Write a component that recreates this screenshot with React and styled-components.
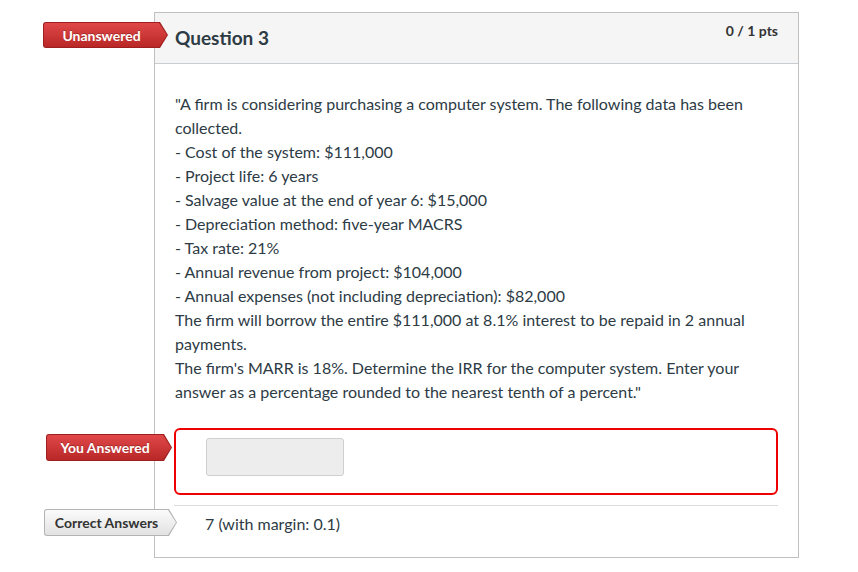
import React from 'react';
import styled, { createGlobalStyle } from 'styled-components';

const GlobalStyle = createGlobalStyle`
  html, body {
    margin: 0;
    padding: 0;
    background: #fff;
  }
  body {
    font-family: Lato, "Open Sans", "Liberation Sans", sans-serif;
    color: #2d3b45;
  }
`;

const Page = styled.div`
  width: 858px;
  height: 572px;
  padding: 12px 0 0 154px;
  box-sizing: border-box;
`;

const QuestionBox = styled.div`
  width: 645px;
  border: 1px solid #c0c0c0;
  box-sizing: border-box;
`;

const Header = styled.div`
  position: relative;
  height: 50px;
  background: #f5f5f5;
  border-bottom: 1px solid #c7cdd1;
  display: flex;
  justify-content: space-between;
  align-items: flex-start;
  padding: 0 20px;
`;

const Title = styled.h2`
  margin: 0;
  padding-top: 13px;
  font-size: 19px;
  font-weight: 700;
  line-height: 24px;
  color: #2d3b45;
`;

const Points = styled.div`
  padding-top: 9px;
  font-size: 14px;
  font-weight: 700;
  line-height: 18px;
  color: #333;
`;

const Badge = styled.div`
  position: absolute;
  left: ${p => p.$left}px;
  top: ${p => p.$top}px;
  width: ${p => p.$width}px;
  height: ${p => p.$height}px;
  clip-path: polygon(0 0, calc(100% - 8px) 0, 100% 50%, calc(100% - 8px) 100%, 0 100%);
  border-radius: 3px 0 0 3px;
  background: ${p => (p.$gray ? '#b4b4b4' : '#9e1f1f')};

  &::before {
    content: '';
    position: absolute;
    inset: 1px;
    clip-path: polygon(0 0, calc(100% - 8px) 0, 100% 50%, calc(100% - 8px) 100%, 0 100%);
    border-radius: 2px 0 0 2px;
    background: ${p =>
      p.$gray
        ? 'linear-gradient(#fbfbfb, #e2e2e2)'
        : 'linear-gradient(#e04848, #b92727)'};
  }
`;

const BadgeLabel = styled.span`
  position: relative;
  display: flex;
  align-items: center;
  justify-content: center;
  height: 100%;
  padding-right: 8px;
  font-size: 14px;
  font-weight: 700;
  color: ${p => (p.$gray ? '#333' : '#fff')};
  text-shadow: ${p => (p.$gray ? 'none' : '0 -1px 0 rgba(0,0,0,0.25)')};
`;

const Content = styled.div`
  padding: 28px 20px 0;
`;

const QuestionText = styled.div`
  font-size: 16px;
  line-height: 24px;
  color: #2d3b45;
`;

const AnswerBox = styled.div`
  position: relative;
  margin: 24px 0 0 -1px;
  height: 67px;
  box-sizing: border-box;
  border: 2px solid #ee0000;
  border-radius: 6px;
  padding: 8px 30px;
`;

const AnswerInput = styled.div`
  width: 138px;
  height: 38px;
  box-sizing: border-box;
  background: #ededed;
  border: 1px solid #cfcfcf;
  border-radius: 3px;
`;

const Divider = styled.div`
  margin: 10px 0 0 -1px;
  border-top: 1px solid #dcdcdc;
`;

const CorrectRow = styled.div`
  position: relative;
  height: 51px;
  padding: 6px 0 0 30px;
  box-sizing: border-box;
  font-size: 16px;
  line-height: 24px;
`;

const lines = [
  '- Cost of the system: $111,000',
  '- Project life: 6 years',
  '- Salvage value at the end of year 6: $15,000',
  '- Depreciation method: five-year MACRS',
  '- Tax rate: 21%',
  '- Annual revenue from project: $104,000',
  '- Annual expenses (not including depreciation): $82,000',
];

export default function App() {
  return (
    <Page>
      <GlobalStyle />
      <QuestionBox>
        <Header>
          <Badge $left={-112} $top={9} $width={125} $height={26}>
            <BadgeLabel>Unanswered</BadgeLabel>
          </Badge>
          <Title>Question 3</Title>
          <Points>0 / 1 pts</Points>
        </Header>
        <Content>
          <QuestionText>
            "A firm is considering purchasing a computer system. The following data has been
            collected.
            {lines.map(l => (
              <React.Fragment key={l}>
                <br />
                {l}
              </React.Fragment>
            ))}
            <br />
            The firm will borrow the entire $111,000 at 8.1% interest to be repaid in 2 annual
            payments.
            <br />
            The firm's MARR is 18%. Determine the IRR for the computer system. Enter your
            answer as a percentage rounded to the nearest tenth of a percent."
          </QuestionText>
          <AnswerBox>
            <Badge $left={-130} $top={4} $width={126} $height={27}>
              <BadgeLabel>You Answered</BadgeLabel>
            </Badge>
            <AnswerInput />
          </AnswerBox>
          <Divider />
          <CorrectRow>
            <Badge $gray $left={-131} $top={3} $width={133} $height={27}>
              <BadgeLabel $gray>Correct Answers</BadgeLabel>
            </Badge>
            7 (with margin: 0.1)
          </CorrectRow>
        </Content>
      </QuestionBox>
    </Page>
  );
}
